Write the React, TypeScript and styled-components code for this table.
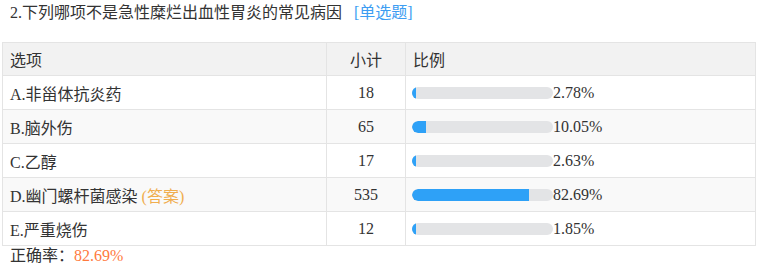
import React from 'react';
import styled, { createGlobalStyle } from 'styled-components';

const GlobalStyle = createGlobalStyle`
  body {
    margin: 0;
    background: #fff;
    font-family: "Liberation Serif", "Noto Sans CJK SC", serif;
    color: #333;
  }
`;

const Wrapper = styled.div`
  width: 761px;
  padding: 0 5px 0 2px;
  box-sizing: border-box;
`;

const Title = styled.div`
  font-size: 16px;
  line-height: 20px;
  padding: 3px 8px 0;
  height: 42px;
  box-sizing: border-box;
  > .type {
    color: #3d9df2;
    margin-left: 12px;
  }
`;

const Table = styled.table`
  width: 754px;
  border-collapse: collapse;
  font-size: 16px;
  table-layout: fixed;
  th, td {
    border: 1px solid #e4e4e4;
    padding: 0 7px;
    text-align: left;
    font-weight: normal;
  }
  th {
    background: #f2f2f2;
    height: 32px;
  }
  td {
    height: 33px;
  }
  .count {
    text-align: center;
  }
  tbody tr:nth-child(even) td {
    background: #f9f9f9;
  }
`;

const Answer = styled.span`
  color: #f0ad4e;
`;

const BarCell = styled.div`
  display: flex;
  align-items: center;
  margin-left: -1px;
`;

const Track = styled.div`
  width: 141px;
  height: 12px;
  border-radius: 6px;
  background: #e3e4e6;
  overflow: hidden;
  > div {
    height: 100%;
    background: #2ea1f7;
    border-radius: 6px 0 0 6px;
  }
`;

const Footer = styled.div`
  font-size: 16px;
  line-height: 20px;
  padding: 0 8px;
  > span {
    color: #ff7a3d;
  }
`;

const rows = [
  { label: 'A.非甾体抗炎药', count: 18, pct: 2.78 },
  { label: 'B.脑外伤', count: 65, pct: 10.05 },
  { label: 'C.乙醇', count: 17, pct: 2.63 },
  { label: 'D.幽门螺杆菌感染', count: 535, pct: 82.69, answer: true },
  { label: 'E.严重烧伤', count: 12, pct: 1.85 },
];

export default function App() {
  return (
    <Wrapper>
      <GlobalStyle />
      <Title>
        2.下列哪项不是急性糜烂出血性胃炎的常见病因<span className="type">[单选题]</span>
      </Title>
      <Table>
        <colgroup>
          <col style={{ width: 324 }} />
          <col style={{ width: 79 }} />
          <col />
        </colgroup>
        <thead>
          <tr>
            <th>选项</th>
            <th className="count">小计</th>
            <th>比例</th>
          </tr>
        </thead>
        <tbody>
          {rows.map(r => (
            <tr key={r.label}>
              <td>
                {r.label}
                {r.answer && <Answer> (答案)</Answer>}
              </td>
              <td className="count">{r.count}</td>
              <td>
                <BarCell>
                  <Track>
                    <div style={{ width: `${Math.max(r.pct, 2.5)}%` }} />
                  </Track>
                  {r.pct.toFixed(2)}%
                </BarCell>
              </td>
            </tr>
          ))}
        </tbody>
      </Table>
      <Footer>
        正确率：<span>82.69%</span>
      </Footer>
    </Wrapper>
  );
}
